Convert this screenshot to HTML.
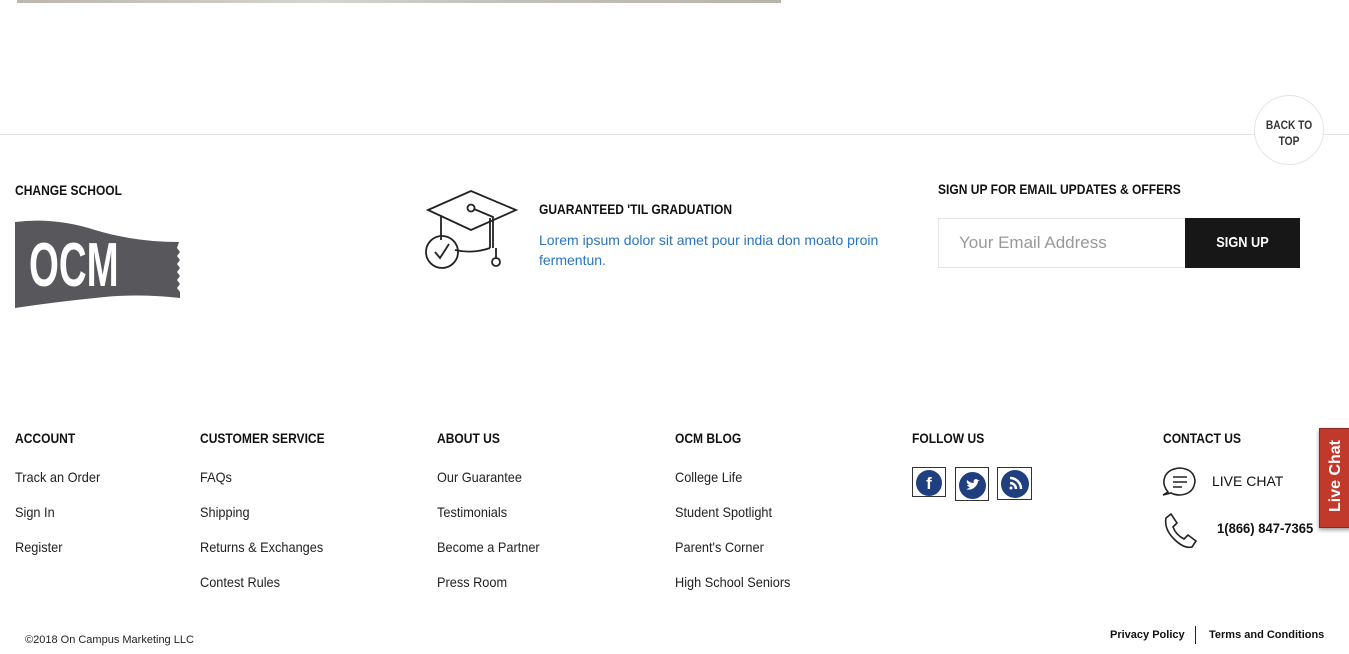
<!DOCTYPE html>
<html><head><meta charset="utf-8"><style>
*{margin:0;padding:0;box-sizing:border-box}
body{width:1349px;height:654px;position:relative;background:#fff;overflow:hidden;font-family:"Liberation Sans",sans-serif;color:#1a1a1a}
.a{position:absolute;white-space:nowrap}
.h{font-weight:bold;font-size:14px;color:#111;transform:scaleX(.86);transform-origin:0 0}
.l{font-size:14px;color:#222;transform:scaleX(.91);transform-origin:0 0}
.s{font-family:"Liberation Sans",sans-serif}
</style></head><body>
<div class="a" style="left:17px;top:0;width:764px;height:3px;background:linear-gradient(90deg,#bbb6ae,#d6d4d0 40%,#c4c2bf 60%,#b8b4aa)"></div>
<div class="a" style="left:0;top:134px;width:1349px;height:1px;background:#e5e5e5"></div>
<div class="a" style="left:1254px;top:95px;width:70px;height:70px;border:1px solid #e5e5e5;border-radius:50%;background:#fff;text-align:center;font-weight:bold;font-size:12px;line-height:16px;padding-top:21px;color:#333"><div style="transform:scaleX(.85)">BACK TO<br>TOP</div></div>

<div class="a h" style="left:15px;top:182px">CHANGE SCHOOL</div>
<svg class="a" style="left:15px;top:220px" width="166" height="90" viewBox="0 0 166 90"><path d="M0 2 Q40 -3 80 10 Q120 22 164 22 L162 28 L165 32 L162 36 L165 40 L162 44 L165 48 L162 52 L165 56 L162 60 L165 64 L162 68 L165 72 L165 78 Q120 73 80 78 Q40 82 0 88 Z" fill="#58575b"/><text x="0" y="0" transform="translate(14 66) scale(.62 1)" font-family="Liberation Sans,sans-serif" font-weight="bold" font-size="62" fill="#fff">OCM</text></svg>

<svg class="a" style="left:423px;top:188px" width="96" height="84" viewBox="0 0 96 84" fill="none" stroke="#222" stroke-width="1.8"><path d="M5 22 L48 3 L93 22 L48 42 Z"/><circle cx="48" cy="20" r="3.5"/><path d="M51 21 L70 29 L70 60"/><path d="M67 30 L67 60"/><circle cx="73" cy="74" r="4"/><path d="M73 60 L73 70"/><path d="M18 27 L18 52"/><path d="M32 62 Q50 66 67 60"/><circle cx="19" cy="64" r="16"/><path d="M12 64 L17 70 L26 56"/></svg>
<div class="a h" style="left:539px;top:201px">GUARANTEED 'TIL GRADUATION</div>
<div class="a s" style="left:539px;top:230px;font-size:14px;line-height:20px;color:#2a74bd;white-space:normal;width:360px">Lorem ipsum dolor sit amet pour india don moato proin fermentun.</div>

<div class="a h" style="left:938px;top:181px">SIGN UP FOR EMAIL UPDATES &amp; OFFERS</div>
<div class="a s" style="left:938px;top:218px;width:248px;height:50px;border:1px solid #e5e5e5;border-right:none;font-size:17px;color:#999;padding:14px 20px">Your Email Address</div>
<div class="a" style="left:1185px;top:218px;width:115px;height:50px;background:#171717;color:#fff;font-weight:bold;font-size:15px;text-align:center;line-height:50px"><div style="transform:scaleX(.85)">SIGN UP</div></div>

<div class="a h" style="left:15px;top:430px">ACCOUNT</div>
<div class="a l" style="left:15px;top:469px">Track an Order</div>
<div class="a l" style="left:15px;top:504px">Sign In</div>
<div class="a l" style="left:15px;top:539px">Register</div>

<div class="a h" style="left:200px;top:430px">CUSTOMER SERVICE</div>
<div class="a l" style="left:200px;top:469px">FAQs</div>
<div class="a l" style="left:200px;top:504px">Shipping</div>
<div class="a l" style="left:200px;top:539px">Returns &amp; Exchanges</div>
<div class="a l" style="left:200px;top:574px">Contest Rules</div>

<div class="a h" style="left:437px;top:430px">ABOUT US</div>
<div class="a l" style="left:437px;top:469px">Our Guarantee</div>
<div class="a l" style="left:437px;top:504px">Testimonials</div>
<div class="a l" style="left:437px;top:539px">Become a Partner</div>
<div class="a l" style="left:437px;top:574px">Press Room</div>

<div class="a h" style="left:675px;top:430px">OCM BLOG</div>
<div class="a l" style="left:675px;top:469px">College Life</div>
<div class="a l" style="left:675px;top:504px">Student Spotlight</div>
<div class="a l" style="left:675px;top:539px">Parent's Corner</div>
<div class="a l" style="left:675px;top:574px">High School Seniors</div>

<div class="a h" style="left:912px;top:430px">FOLLOW US</div>
<div class="a" style="left:912px;top:467px;width:34px;height:30px;border:1px solid #333"><div style="margin:2px 0 0 3px;width:26px;height:26px;border-radius:50%;background:#1f3f7e;color:#fff;font:bold 17px 'Liberation Sans',sans-serif;text-align:center;line-height:27px">f</div></div>
<div class="a" style="left:955px;top:467px;width:34px;height:34px;border:1px solid #333"><div style="margin:4px 0 0 3px;width:27px;height:27px;border-radius:50%;background:#1f3f7e;position:relative"><svg width="27" height="27" viewBox="0 0 27 27"><path d="M7 17 Q12 19 16 15 Q19 12 19 9 L21 8 L19 8 Q17 6 15 8 Q14 10 15 11 Q11 11 8 8 Q7 11 10 13 L8 13 Q9 15 11 15 Q9 17 7 17Z" fill="#fff"/></svg></div></div>
<div class="a" style="left:997px;top:467px;width:35px;height:33px;border:1px solid #333"><div style="margin:2px 0 0 3px;width:28px;height:28px;border-radius:50%;background:#1f3f7e"><svg width="28" height="28" viewBox="0 0 28 28" fill="none" stroke="#fff" stroke-width="2.5"><circle cx="10" cy="18" r="1.5" fill="#fff" stroke="none"/><path d="M9 13 A6 6 0 0 1 15 19"/><path d="M9 8 A11 11 0 0 1 20 19"/></svg></div></div>

<div class="a h" style="left:1163px;top:430px">CONTACT US</div>
<svg class="a" style="left:1162px;top:466px" width="36" height="34" viewBox="0 0 36 34" fill="none" stroke="#222" stroke-width="1.6"><path d="M6 26 Q1 20 2 14 Q4 3 18 2 Q32 3 33 15 Q32 28 18 29 Q13 29 9 27 L1 29 Z"/><path d="M11 11 H25 M11 16 H25 M11 21 H20"/></svg>
<div class="a s" style="left:1212px;top:473px;font-size:14px;color:#111">LIVE CHAT</div>
<svg class="a" style="left:1162px;top:513px" width="36" height="36" viewBox="0 0 36 36" fill="none" stroke="#222" stroke-width="1.6"><path d="M4 5 L9 1 L15 10 L11 14 Q14 22 22 26 L26 22 L34 28 L30 34 Q22 36 12 26 Q2 16 4 5 Z"/></svg>
<div class="a" style="left:1217px;top:520px;font-size:14px;font-weight:bold;color:#111;transform:scaleX(.93);transform-origin:0 0">1(866) 847-7365</div>

<div class="a" style="left:1319px;top:428px;width:32px;height:100px;background:#c0392b;border:1px solid #8a2a1f;box-shadow:0 2px 4px rgba(0,0,0,.4)"><div style="position:absolute;left:-26px;top:38px;width:84px;transform:rotate(-90deg);color:#fff;font:bold 16px 'Liberation Sans',sans-serif;text-align:center">Live Chat</div></div>

<div class="a s" style="left:25px;top:634px;font-size:11px;color:#222">©2018 On Campus Marketing LLC</div>
<div class="a s" style="left:1110px;top:629px;font-size:11px;font-weight:bold;color:#111">Privacy Policy</div>
<div class="a" style="left:1195px;top:626px;width:1px;height:18px;background:#222"></div>
<div class="a s" style="left:1209px;top:629px;font-size:11px;font-weight:bold;color:#111">Terms and Conditions</div>
</body></html>
